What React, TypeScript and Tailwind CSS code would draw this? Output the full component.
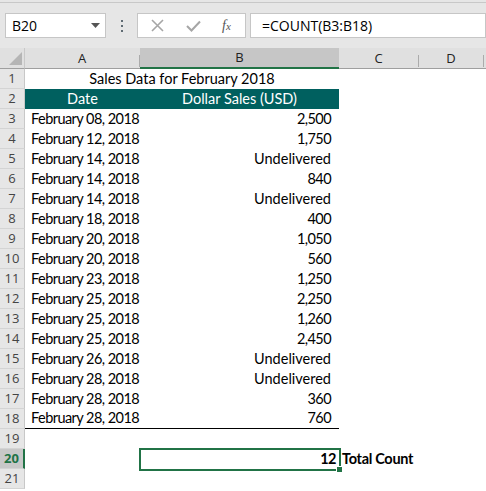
import React from "react";

const rows: { a: string; b: string; kind?: string }[] = [
  { a: "February 08, 2018", b: "2,500" },
  { a: "February 12, 2018", b: "1,750" },
  { a: "February 14, 2018", b: "Undelivered" },
  { a: "February 14, 2018", b: "840" },
  { a: "February 14, 2018", b: "Undelivered" },
  { a: "February 18, 2018", b: "400" },
  { a: "February 20, 2018", b: "1,050" },
  { a: "February 20, 2018", b: "560" },
  { a: "February 23, 2018", b: "1,250" },
  { a: "February 25, 2018", b: "2,250" },
  { a: "February 25, 2018", b: "1,260" },
  { a: "February 25, 2018", b: "2,450" },
  { a: "February 26, 2018", b: "Undelivered" },
  { a: "February 28, 2018", b: "Undelivered" },
  { a: "February 28, 2018", b: "360" },
  { a: "February 28, 2018", b: "760" },
];

const cellFont = "font-['Lato','Liberation_Sans',sans-serif] text-[14.5px] text-black whitespace-nowrap leading-none";

function RowHeader({ n, selected }: { n: number; selected?: boolean }) {
  return (
    <div
      className={
        "w-[25px] h-[20px] shrink-0 flex items-center justify-center border-b border-[#d4d4d4] font-['Open_Sans','Liberation_Sans',sans-serif] text-[13px] leading-none " +
        (selected
          ? "bg-[#c8c8c8] text-[#217346] font-bold border-r-2 border-r-[#217346]"
          : "bg-[#e6e6e6] text-[#444] border-r border-r-[#c8c8c8]")
      }
    >
      {n}
    </div>
  );
}

function ColHeader({ label, w, selected }: { label: string; w: string; selected?: boolean }) {
  return (
    <div
      className={
        "h-full flex items-end shrink-0 " +
        w +
        (selected ? " bg-[#c6c6c6] border-b-2 border-[#217346]" : " border-b border-[#9f9f9f]")
      }
    >
      <div className="flex-1 self-stretch flex items-center justify-center font-['Open_Sans','Liberation_Sans',sans-serif] text-[13px] text-[#222] leading-none">
        {label}
      </div>
      {!selected && <div className="w-px h-[12px] bg-[#ababab] mb-[1px]" />}
    </div>
  );
}

export default function App() {
  return (
    <div className="w-[486px] h-[491px] bg-white overflow-hidden flex flex-col">
      {/* Formula bar */}
      <div className="h-[48px] shrink-0 bg-[#e6e6e6] flex flex-col">
        <div className="h-[2px] bg-[#e6e6e6]" />
        <div className="h-px bg-[#c8c8c8]" />
        <div className="flex items-center pt-[10px] pl-[5px]">
          <div className="w-[101px] h-[25px] bg-white border border-[#c6c6c6] flex items-center pl-[6px] pr-[4px]">
            <span className="flex-1 font-['Open_Sans','Liberation_Sans',sans-serif] text-[14px] text-black">B20</span>
            <svg width="9" height="5" viewBox="0 0 9 5" className="mr-[1px]">
              <path d="M0 0 L9 0 L4.5 5 Z" fill="#555" />
            </svg>
          </div>
          <div className="w-[31px] flex flex-col items-center gap-[3px]">
            <div className="w-[2px] h-[2px] bg-[#5f6b73]" />
            <div className="w-[2px] h-[2px] bg-[#5f6b73]" />
            <div className="w-[2px] h-[2px] bg-[#5f6b73]" />
          </div>
          <div className="w-[109px] h-[25px] bg-white border border-[#c6c6c6] flex items-center">
            <svg width="13" height="13" viewBox="0 0 13 13" className="ml-[13px]">
              <path d="M1 1 L12 12 M12 1 L1 12" stroke="#a6a6a6" strokeWidth="1.6" />
            </svg>
            <svg width="15" height="12" viewBox="0 0 15 12" className="ml-[22px]">
              <path d="M1 6 L5.5 10.5 L14 1.5" stroke="#a6a6a6" strokeWidth="2" fill="none" />
            </svg>
            <span className="ml-[21px] font-['Liberation_Serif',serif] italic text-[14px] text-[#555] leading-none">
              f<span className="text-[11px]">x</span>
            </span>
          </div>
          <div className="ml-[4px] flex-1 h-[25px] bg-white border border-[#c6c6c6] flex items-center pl-[11px]">
            <span className="font-['Open_Sans','Liberation_Sans',sans-serif] text-[14px] text-black">=COUNT(B3:B18)</span>
          </div>
        </div>
      </div>

      {/* Column headers */}
      <div className="h-[21px] shrink-0 flex bg-[#e0e0e0]">
        <div className="w-[25px] h-full shrink-0 flex items-end justify-end border-b border-[#9f9f9f] border-r border-r-[#c8c8c8] pr-[2px] pb-[3px]">
          <svg width="13" height="13" viewBox="0 0 13 13">
            <path d="M13 0 L13 13 L0 13 Z" fill="#b5b5b5" />
          </svg>
        </div>
        <ColHeader label="A" w="w-[115px]" />
        <ColHeader label="B" w="w-[199px]" selected />
        <ColHeader label="C" w="w-[80px]" />
        <ColHeader label="D" w="w-[65px]" />
        <div className="flex-1 border-b border-[#9f9f9f]" />
      </div>

      {/* Rows */}
      <div className="flex flex-col">
        <div className="flex h-[20px]">
          <RowHeader n={1} />
          <div className={"w-[314px] shrink-0 flex items-center justify-center " + cellFont}>Sales Data for February 2018</div>
        </div>
        <div className="flex h-[20px]">
          <RowHeader n={2} />
          <div className="w-[314px] shrink-0 flex bg-[#00605f] text-white font-['Lato','Liberation_Sans',sans-serif] text-[14.5px] leading-none whitespace-nowrap">
            <div className="w-[115px] flex items-center justify-center">Date</div>
            <div className="w-[199px] flex items-center justify-center">Dollar Sales (USD)</div>
          </div>
        </div>
        {rows.map((r, i) => {
          const numeric = r.b !== "Undelivered";
          return (
            <div key={i} className="flex h-[20px]">
              <RowHeader n={i + 3} />
              <div
                className={
                  "w-[314px] shrink-0 flex " + (i === rows.length - 1 ? "border-b border-black" : "")
                }
              >
                <div className={"w-[115px] shrink-0 flex items-center pl-[6px] tracking-[-0.55px] " + cellFont}>{r.a}</div>
                <div
                  className={
                    "w-[199px] shrink-0 flex items-center justify-end pr-[8px] " +
                    (numeric ? "tracking-[-0.6px] " : "") +
                    cellFont
                  }
                >
                  {r.b}
                </div>
              </div>
            </div>
          );
        })}
        <div className="flex h-[20px]">
          <RowHeader n={19} />
        </div>
        <div className="flex h-[20px]">
          <RowHeader n={20} selected />
          <div className="w-[115px] shrink-0" />
          <div className={"relative w-[199px] shrink-0 flex items-center justify-end pr-[3px] font-bold tracking-[-0.5px] " + cellFont}>
            12
            <div className="absolute -left-px -top-px -right-[2px] -bottom-[2px] border-2 border-[#217346]" />
            <div className="absolute -right-[4px] -bottom-[4px] w-[7px] h-[7px] bg-[#217346] border border-white" />
          </div>
          <div className={"flex items-center pl-[3px] font-bold tracking-[-0.3px] " + cellFont}>Total Count</div>
        </div>
        <div className="flex h-[20px]">
          <RowHeader n={21} />
        </div>
      </div>
    </div>
  );
}
